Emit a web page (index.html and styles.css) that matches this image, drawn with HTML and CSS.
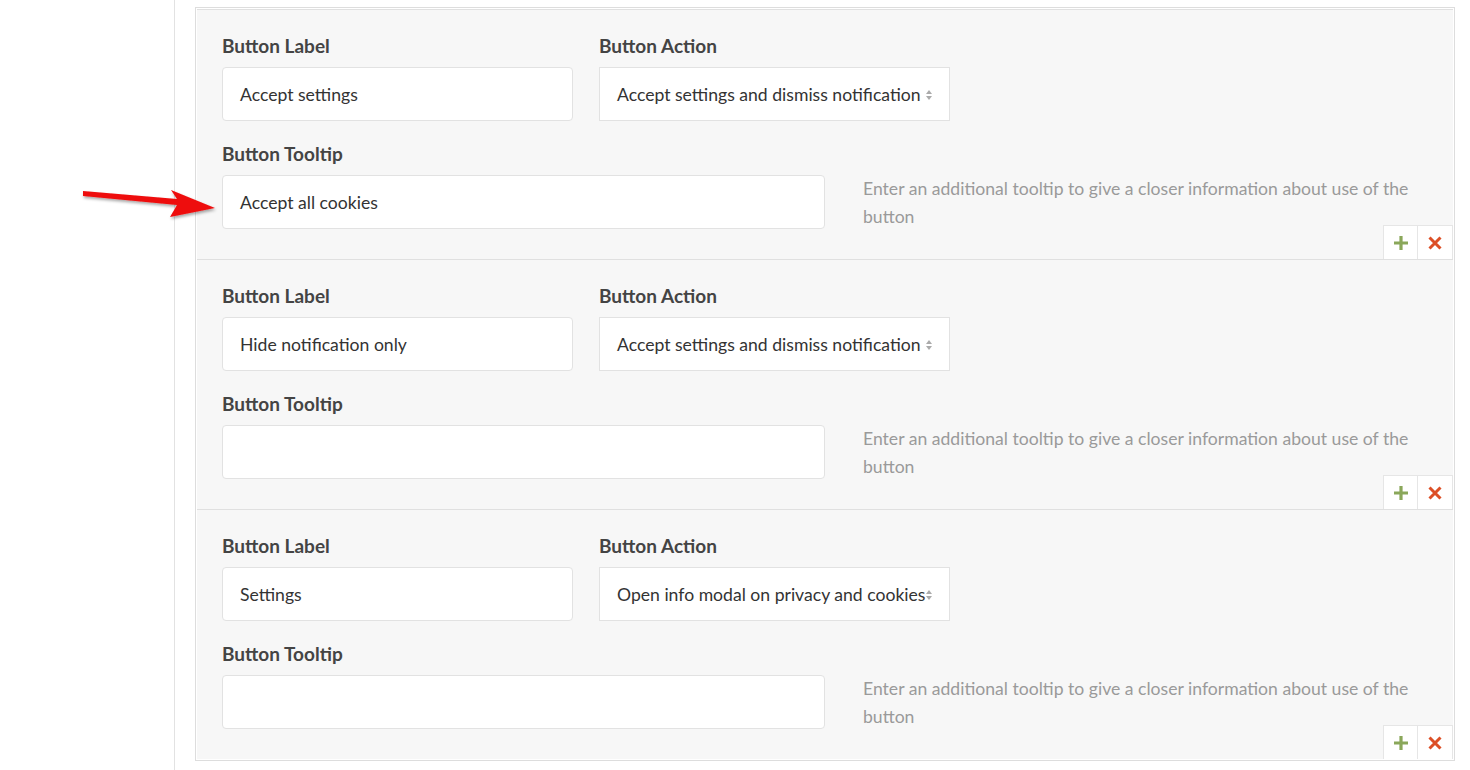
FILE: index.html
```html
<!DOCTYPE html>
<html lang="en">
<head>
<meta charset="utf-8">
<title>Buttons</title>
<link rel="stylesheet" href="styles.css">
</head>
<body>
<div class="page">
  <aside class="sidebar"></aside>
  <main class="main">
    <div class="repeater">
      <div class="item">
        <div class="row-top">
          <div class="field">
            <label class="lbl">Button Label</label>
            <div class="input">Accept settings</div>
          </div>
          <div class="field">
            <label class="lbl">Button Action</label>
            <div class="select"><span class="select-text">Accept settings and dismiss notification</span>
              <svg class="caret" width="8" height="12" viewBox="0 0 8 12"><path d="M4 1 L7 5 L1 5 Z M4 11 L7 7 L1 7 Z" fill="#aaa"/></svg>
            </div>
          </div>
        </div>
        <div class="row-tip">
          <div class="field tip-field">
            <label class="lbl">Button Tooltip</label>
            <div class="input">Accept all cookies</div>
          </div>
          <p class="help">Enter an additional tooltip to give a closer information about use of the button</p>
        </div>
        <div class="actions">
          <button class="act"><svg width="18" height="18" viewBox="0 0 18 18"><path d="M9 2 V16 M2 9 H16" stroke="#8aa75a" stroke-width="3.2"/></svg></button>
          <button class="act act-del"><svg width="16" height="16" viewBox="0 0 16 16"><path d="M2.5 2.5 L13.5 13.5 M13.5 2.5 L2.5 13.5" stroke="#dc4f26" stroke-width="3"/></svg></button>
        </div>
      </div>

      <div class="item">
        <div class="row-top">
          <div class="field">
            <label class="lbl">Button Label</label>
            <div class="input">Hide notification only</div>
          </div>
          <div class="field">
            <label class="lbl">Button Action</label>
            <div class="select"><span class="select-text">Accept settings and dismiss notification</span>
              <svg class="caret" width="8" height="12" viewBox="0 0 8 12"><path d="M4 1 L7 5 L1 5 Z M4 11 L7 7 L1 7 Z" fill="#aaa"/></svg>
            </div>
          </div>
        </div>
        <div class="row-tip">
          <div class="field tip-field">
            <label class="lbl">Button Tooltip</label>
            <div class="input"></div>
          </div>
          <p class="help">Enter an additional tooltip to give a closer information about use of the button</p>
        </div>
        <div class="actions">
          <button class="act"><svg width="18" height="18" viewBox="0 0 18 18"><path d="M9 2 V16 M2 9 H16" stroke="#8aa75a" stroke-width="3.2"/></svg></button>
          <button class="act act-del"><svg width="16" height="16" viewBox="0 0 16 16"><path d="M2.5 2.5 L13.5 13.5 M13.5 2.5 L2.5 13.5" stroke="#dc4f26" stroke-width="3"/></svg></button>
        </div>
      </div>

      <div class="item">
        <div class="row-top">
          <div class="field">
            <label class="lbl">Button Label</label>
            <div class="input">Settings</div>
          </div>
          <div class="field">
            <label class="lbl">Button Action</label>
            <div class="select"><span class="select-text">Open info modal on privacy and cookies</span>
              <svg class="caret" width="8" height="12" viewBox="0 0 8 12"><path d="M4 1 L7 5 L1 5 Z M4 11 L7 7 L1 7 Z" fill="#aaa"/></svg>
            </div>
          </div>
        </div>
        <div class="row-tip">
          <div class="field tip-field">
            <label class="lbl">Button Tooltip</label>
            <div class="input"></div>
          </div>
          <p class="help">Enter an additional tooltip to give a closer information about use of the button</p>
        </div>
        <div class="actions">
          <button class="act"><svg width="18" height="18" viewBox="0 0 18 18"><path d="M9 2 V16 M2 9 H16" stroke="#8aa75a" stroke-width="3.2"/></svg></button>
          <button class="act act-del"><svg width="16" height="16" viewBox="0 0 16 16"><path d="M2.5 2.5 L13.5 13.5 M13.5 2.5 L2.5 13.5" stroke="#dc4f26" stroke-width="3"/></svg></button>
        </div>
      </div>
    </div>
  </main>
</div>
<svg class="pointer" width="240" height="240" viewBox="0 0 240 240">
  <defs>
    <filter id="sh" x="-20%" y="-50%" width="140%" height="200%">
      <feDropShadow dx="1" dy="2" stdDeviation="1.5" flood-color="#000" flood-opacity="0.35"/>
    </filter>
  </defs>
  <polygon points="83,191 177,199 171,190 215,208 170,217 177,205 83,196" fill="#ee0c0c" filter="url(#sh)" stroke-linejoin="round"/>
</svg>
</body>
</html>
```

FILE: styles.css
```css
* { box-sizing: border-box; }
html, body { margin: 0; padding: 0; background: #fff; }
body {
  font-family: "Lato", "Liberation Sans", sans-serif;
  font-size: 17.6px;
  color: #333;
  position: relative;
  height: 770px;
  overflow: hidden;
}
.page { display: flex; min-height: 770px; }
.sidebar { width: 175px; flex: none; border-right: 1px solid #e2e2e2; }
.main { flex: 1; padding: 7px 15px 0 20px; }
.repeater { border: 1px solid #dddddd; padding: 1px; background: #fff; }
.item {
  background: #f7f7f7;
  border-top: 1px solid #e0e0e0;
  padding: 24px 0 0 25px;
}
.row-top { display: grid; grid-template-columns: 351px 351px; column-gap: 26px; }
.lbl {
  display: block;
  font-weight: 700;
  font-size: 19px;
  color: #444;
  line-height: 24px;
  margin-bottom: 9px;
}
.input {
  height: 54px;
  background: #fff;
  border: 1px solid #e2e2e2;
  border-radius: 4px;
  padding: 0 17px;
  display: flex;
  align-items: center;
  color: #333;
}
.select {
  position: relative;
  height: 54px;
  background: #fff;
  border: 1px solid #e2e2e2;
  padding: 0 0 0 17px;
  display: flex;
  align-items: center;
  overflow: hidden;
}
.select-text { white-space: nowrap; color: #333; }
.caret { position: absolute; right: 16px; top: 21px; }
.row-tip { display: flex; margin-top: 21px; }
.tip-field { width: 603px; flex: none; }
.help {
  margin: 33px 0 -4px 38px;
  width: 570px;
  line-height: 28px;
  color: #9a9a9a;
}
.actions { display: flex; justify-content: flex-end; margin-top: -4px; }
.act {
  width: 35px;
  height: 34px;
  background: #fff;
  border: 1px solid #e6e6e6;
  border-bottom: none;
  padding: 0;
  display: flex;
  align-items: center;
  justify-content: center;
}
.act-del { border-left: none; }
.pointer { position: absolute; left: 0; top: 0; pointer-events: none; }
```
